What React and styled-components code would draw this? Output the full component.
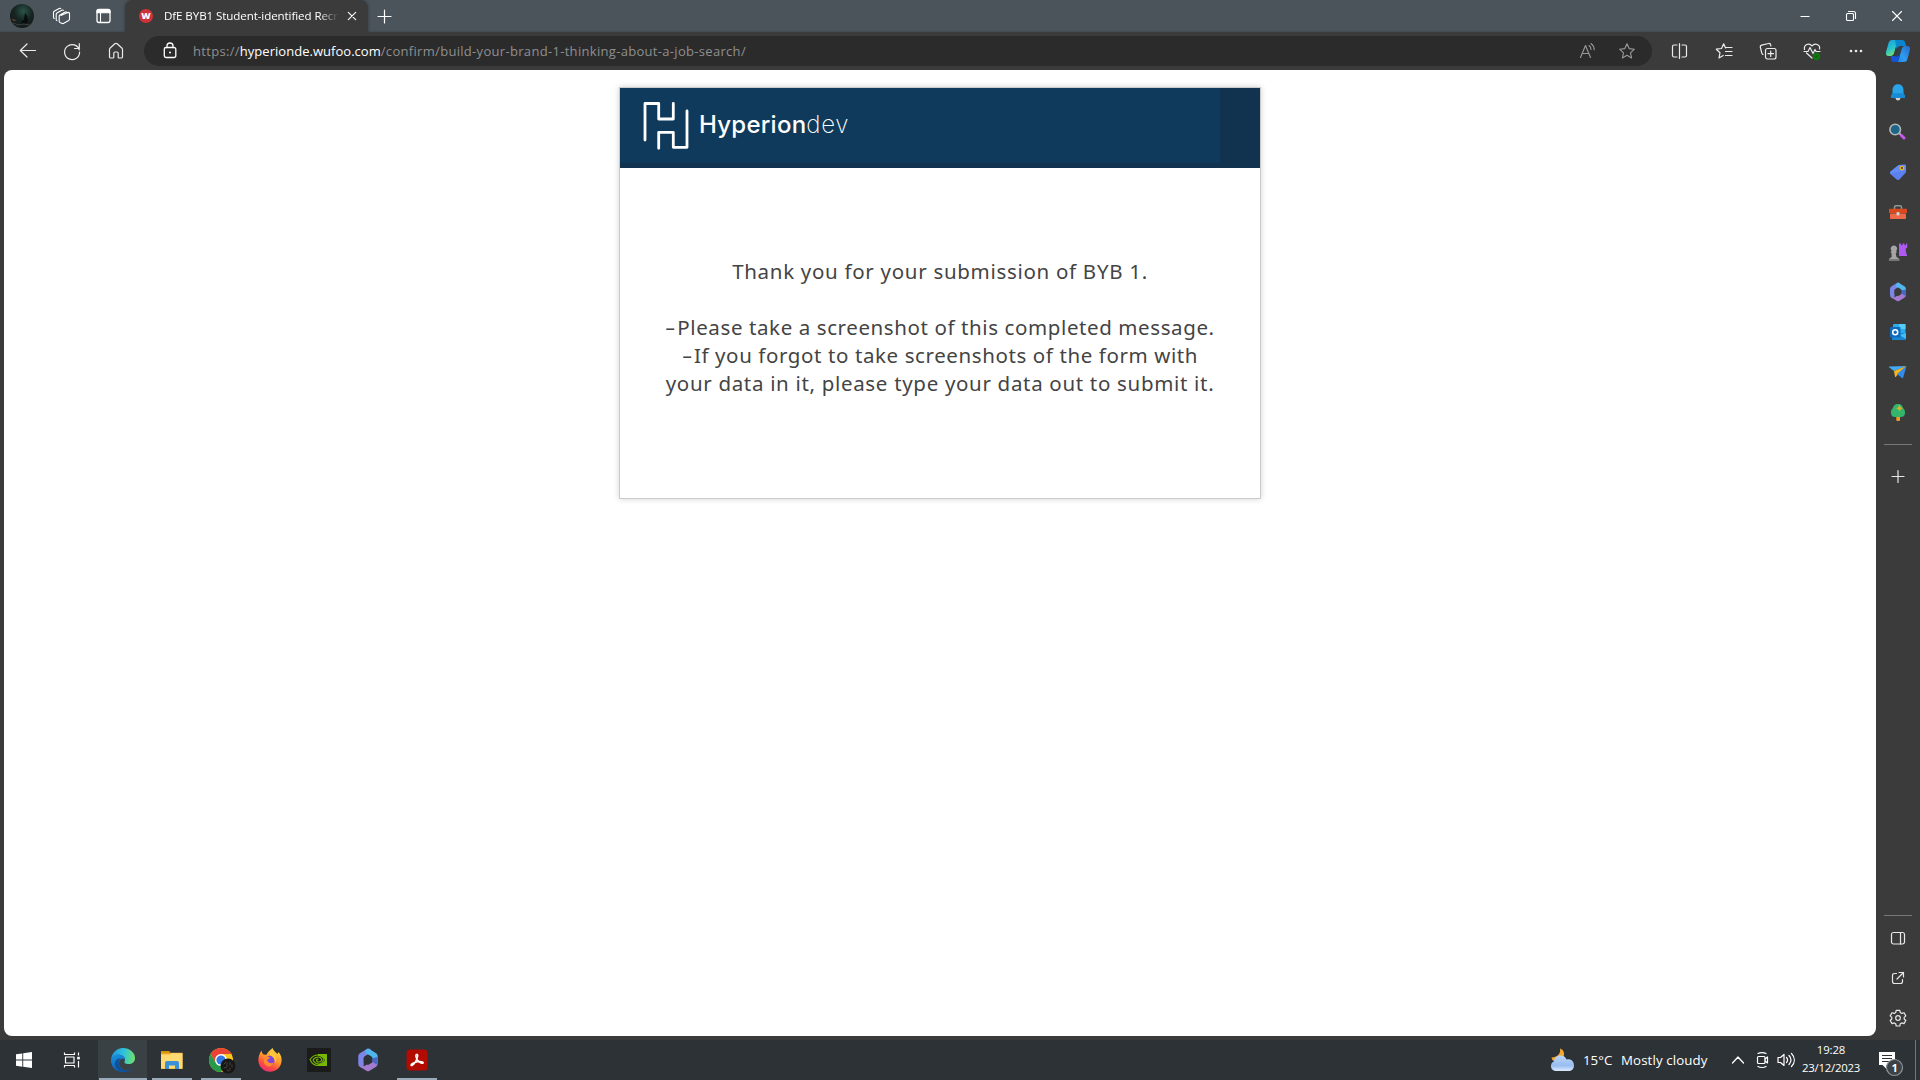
import React from "react";
import styled, { createGlobalStyle } from "styled-components";

const Global = createGlobalStyle`
  * { box-sizing: border-box; }
  html, body { margin: 0; padding: 0; height: 100%; overflow: hidden; }
  body { background: #3b3b3b; font-family: "Open Sans", "Noto Sans", sans-serif; }
`;

const Desktop = styled.div`
  width: 1920px;
  height: 1080px;
  display: flex;
  flex-direction: column;
  background: #3b3b3b;
  overflow: hidden;
`;

const TitleBar = styled.header`
  height: 32px;
  display: flex;
  align-items: center;
  background: linear-gradient(#4b545b 0 30px, #424b50 32px);
  color: #fff;
`;

const Cell = styled.div`
  flex: none;
  width: ${(p) => p.$w}px;
  height: ${(p) => (p.$h ? p.$h + "px" : "auto")};
  display: flex;
  align-items: center;
  justify-content: center;
  color: ${(p) => p.$color || "inherit"};
`;

const Spacer = styled.div`
  flex: ${(p) => (p.$w ? `0 0 ${p.$w}px` : "1 1 0")};
`;

const Tab = styled.div`
  width: 243px;
  height: 32px;
  display: flex;
  align-items: center;
  padding-left: 14px;
  background: #3b3b3b;
  border-radius: 8px 8px 0 0;
  box-shadow: 0 0 3px rgba(20, 25, 30, 0.5);
  clip-path: inset(0 -4px 0 -4px);
`;

const TabTitle = styled.div`
  width: 175px;
  margin-left: 11px;
  white-space: nowrap;
  font-size: 11.6px;
  line-height: 16px;
  letter-spacing: ${(p) => p.$spacing}px;
  mask-image: linear-gradient(90deg, #000 155px, transparent 175px);
`;

const Toolbar = styled.div`
  height: 38px;
  display: flex;
  align-items: center;
  color: #ececec;
`;

const AddressBar = styled.div`
  width: 1508px;
  height: 30px;
  display: flex;
  align-items: center;
  border-radius: 15px;
  background: #2b2b2b;
`;

const Url = styled.div`
  font-size: 13px;
  line-height: 18px;
  white-space: nowrap;
  color: #8f8f8f;
  letter-spacing: ${(p) => p.$spacing}px;
`;

const Host = styled.span`
  color: #fff;
  letter-spacing: ${(p) => p.$spacing}px;
`;

const Main = styled.div`
  height: 970px;
  display: flex;
  padding-left: 4px;
`;

const Page = styled.main`
  width: 1872px;
  height: 966px;
  display: flex;
  flex-direction: column;
  align-items: center;
  padding: 17px 0 0 0;
  border-radius: 8px;
  background: #fff;
`;

const Card = styled.section`
  width: 642px;
  height: 412px;
  border: 1px solid #ccc;
  box-shadow: 0 0 6px rgba(0, 0, 0, 0.18);
  background: #fff;
`;

const Banner = styled.div`
  height: 80px;
  display: flex;
  background: #123350;
`;

const BannerArt = styled.div`
  width: 600px;
  height: 75px;
  display: flex;
  align-items: flex-start;
  padding: 12px 0 0 20px;
  background: #0f3a5b;
`;

const Brand = styled.div`
  margin: 9px 0 0 8px;
  font-family: Inter, sans-serif;
  font-size: 24px;
  line-height: 32px;
  font-weight: 500;
  letter-spacing: 0.25px;
  color: #fff;
`;

const BrandLight = styled.span`
  font-weight: 200;
  letter-spacing: 0.7px;
`;

const Message = styled.div`
  padding-top: 89px;
  font-family: "Noto Sans", sans-serif;
  font-size: 20.5px;
  color: #444;
`;

const Line = styled.p`
  margin: 0 0 ${(p) => p.$gap || 0}px;
  height: 28px;
  line-height: 28px;
  text-align: center;
  white-space: nowrap;
  letter-spacing: ${(p) => p.$spacing}px;
`;

const Dash = styled.span`
  display: inline-block;
  width: 12px;
  transform: scaleX(1.6);
  transform-origin: 0 50%;
  text-align: left;
`;

const Sidebar = styled.aside`
  width: 44px;
  display: flex;
  flex-direction: column;
  align-items: center;
  padding: 2px 0;
  color: #e8e8e8;
`;

const Rule = styled.div`
  flex: none;
  width: 28px;
  height: 1px;
  margin: ${(p) => p.$margin};
  background: #777;
`;

const Taskbar = styled.footer`
  height: 40px;
  display: flex;
  align-items: stretch;
  background: #2d3236;
  color: #fff;
`;

const Task = styled.div`
  width: 49px;
  display: flex;
  align-items: center;
  justify-content: center;
  position: relative;
  background: ${(p) => (p.$active ? "#3a4145" : "transparent")};
  &::after {
    content: "";
    display: ${(p) => (p.$bar ? "block" : "none")};
    position: absolute;
    bottom: 0;
    width: ${(p) => p.$bar}px;
    height: 2px;
    background: #99abbb;
  }
`;

const Weather = styled.div`
  display: flex;
  align-items: center;
  font-size: 13.3px;
  white-space: nowrap;
  letter-spacing: ${(p) => p.$spacing}px;
  width: ${(p) => p.$w}px;
`;

const Clock = styled.div`
  width: 68px;
  display: flex;
  flex-direction: column;
  align-items: center;
  padding-top: 1px;
  font-size: 11.4px;
  line-height: 18px;
  white-space: nowrap;
`;

const ClockLine = styled.span`
  letter-spacing: ${(p) => p.$spacing}px;
`;

const DesktopEdge = styled.div`
  width: 1px;
  background: #70767a;
`;

const Glyph = styled.svg`
  display: block;
  overflow: visible;
  fill: none;
  stroke: currentColor;
  stroke-width: ${(p) => p.$stroke || 1.1};
  stroke-linecap: round;
  stroke-linejoin: round;
`;

const Badge = styled.text`
  font: 700 11px "Open Sans", sans-serif;
  fill: #fff;
  stroke: none;
`;

const Favicon = styled.div`
  width: 14px;
  height: 14px;
  border-radius: 7px;
  background: #cf3339;
  color: #fff;
  font: 800 9px/14px "Open Sans", sans-serif;
  text-align: center;
`;

/* 24px artboard whose origin is its centre */
const Icon = ({ children, stroke, x = 0, y = 0 }) => (
  <Glyph width="24" height="24" viewBox={`${-12 - x} ${-12 - y} 24 24`} $stroke={stroke}>
    {children}
  </Glyph>
);

const Avatar = () => (
  <Icon>
    <defs>
      <radialGradient id="av" cx=".55" cy=".3" r=".7">
        <stop offset="0" stopColor="#2c5448" />
        <stop offset=".55" stopColor="#152421" />
        <stop offset="1" stopColor="#181a1a" />
      </radialGradient>
    </defs>
    <circle r="12" fill="url(#av)" stroke="none" />
    <path d="M3-3l2 3 1 5-2 3-2-1-4 2 2-4 2-1z" fill="#070d0c" stroke="none" />
    <path d="M-11 3l6 1-3 1z" fill="#6f4a2a" stroke="none" />
    <path d="M-9 7l5 2 5-1 7 1" stroke="#35413d" strokeWidth="1" />
  </Icon>
);

const Workspaces = () => (
  <Icon x={-0.5}>
    <path d="M-.6-.600L6.200-3.600c1-.4 1.800 0 1.800 1V3c0 .7-.2 1.100-.8 1.500L2.300 7.300c-.8.500-1.500.300-2.200-.1L-1.500 6.500c-.6-.3-.8-.7-.8-1.300V.300c0-.6.2-1 .7-1.300l4.800-2.800c.6-.4 1-.4 1.600-.1l1.900.8" />
    <path d="M-4.600 4.600c-.5-.3-.7-.6-.7-1.200V-1.700c0-.6.200-1 .7-1.300L.3-5.800c.600-.3 1-.3 1.600 0" />
    <path d="M-7.300 2.500c-.5-.3-.700-.6-.7-1.200V-3.500c0-.6.200-1 .7-1.300l4.900-2.800c.6-.3 1-.3 1.600 0" />
  </Icon>
);

const TabActions = () => (
  <Icon x={0.5}>
    <rect x="-6.500" y="-6.500" width="13" height="13" rx="2" strokeWidth="1.300" />
    <path d="M-6.500-5c0-1 .7-1.500 1.500-1.500h10c1 0 1.500.5 1.500 1.500v1.700h-13z" fill="currentColor" />
    <path d="M-3-3.500V6.500" />
  </Icon>
);

const Cross = ({ r = 4 }) => (
  <Icon>
    <path d={`M${-r} ${-r}L${r} ${r}M${r} ${-r}L${-r} ${r}`} />
  </Icon>
);

const Plus = ({ r = 6.5, x }) => (
  <Icon stroke={1.2} x={x}>
    <path d={`M${-r} .5H${r}M0 ${-r + 0.5}V${r + 0.5}`} />
  </Icon>
);

const Back = () => (
  <Icon stroke={1.2}>
    <path d="M7.500 -.5H-7.500M-1-7L-7.700-.5L-1 6" />
  </Icon>
);
const Refresh = () => (
  <Icon stroke={1.2}>
    <path d="M7.300-1A7.500 7.500 0 1 0 7.600 1.200M7.300-7.500V-2.500H2.500" />
  </Icon>
);
const Home = () => (
  <Icon stroke={1.2}>
    <path d="M-6.500-1.500c0-.6.2-1 .7-1.500l4.600-4.200c.7-.6 1.700-.6 2.400 0L5.800-3c.5.5.7.9.7 1.500v7.300c0 .7-.5 1.200-1.200 1.200H3.200c-.7 0-1-.4-1-1V2.300c0-.8-.5-1.300-1.200-1.300h-2c-.7 0-1.200.5-1.200 1.300V6c0 .6-.3 1-1 1h-2.100c-.7 0-1.200-.5-1.200-1.200z" />
  </Icon>
);
const Lock = () => (
  <Icon stroke={1.3}>
    <rect x="-5.700" y="-3.500" width="11.500" height="10" rx="1.700" />
    <path d="M-3-3.500V-5c0-1.700 1.300-3 3-3s3 1.300 3 3v1.500" />
    <circle cx="0" cy="1.500" r="1" fill="currentColor" stroke="none" />
  </Icon>
);
const ReadAloud = () => (
  <Icon x={0.5}>
    <path d="M-7 6.500L-2-5.500L3 6.500M-5.300 2.500H1.300M1.500-5.500c1.300.9 2 2.200 2 4M3.500-7.500c2 1.500 3.200 3.500 3.200 6.300" />
  </Icon>
);
const starPath =
  "M0-7.200L2.200-2.400L7.400-1.800L3.500 1.800L4.600 7L0 4.300L-4.600 7L-3.500 1.800L-7.400-1.800L-2.200-2.400Z";
const Star = () => (
  <Icon>
    <path d={starPath} />
  </Icon>
);
const Split = () => (
  <Icon stroke={1.2} x={0.5}>
    <path d="M-2.500 6h-3c-1 0-1.500-.6-1.500-1.500v-9c0-.9.500-1.500 1.500-1.500h3M2.500 6h3c1 0 1.500-.6 1.500-1.500v-9c0-.9-.5-1.500-1.500-1.500h-3M0-7.500V7.500" />
  </Icon>
);
const Favorites = () => (
  <Icon stroke={1.2}>
    <path d="M1.500-3L-.3-7.200L-2.500-2.500L-7.700-1.800L-4 1.700L-5 7L-.8 4.500M2-3.500H8M1.500.5H8M1.500 4.500H8" />
  </Icon>
);
const Collections = () => (
  <Icon stroke={1.2}>
    <rect x="-2.500" y="-2.500" width="10.500" height="10.500" rx="2" />
    <path d="M2.700 0v5.500M0 2.700h5.500M-5 3.500c-.7-.2-1-.8-1.200-1.500L-7.600-3.500c-.3-1.200.2-2 1.300-2.300L.5-7.500c1-.3 1.800.200 2.100 1.300l.3 1.200" />
  </Icon>
);
const Health = () => (
  <Icon stroke={1.2}>
    <path d="M-7.500-1.500c-1-4.500 4.500-7.500 7.500-3.500c3-4 8.500-1 7.500 3M-5.500 2L0 7M-8 .500h4l2-4 3 6 2-4 1 2h4" />
    <circle cx="4.500" cy="5.500" r="3.700" fill="#117711" stroke="none" />
    <path d="M3 5.500l1 1 2-2" stroke="#0a4f0a" strokeWidth=".8" />
  </Icon>
);
const Dots = () => (
  <Icon>
    <g fill="currentColor" stroke="none">
      <circle cx="-5" r="1.300" />
      <circle cx="0" r="1.300" />
      <circle cx="5" r="1.300" />
    </g>
  </Icon>
);
const Copilot = () => (
  <Icon>
    <defs>
      <linearGradient id="cpA" x1="0" y1="0" x2=".4" y2="1">
        <stop offset="0" stopColor="#169fdc" />
        <stop offset=".55" stopColor="#26c0cf" />
        <stop offset="1" stopColor="#69df7c" />
      </linearGradient>
      <linearGradient id="cpB" x1="1" y1="0" x2="0" y2="1">
        <stop offset="0" stopColor="#2468c8" />
        <stop offset=".6" stopColor="#2f9df0" />
        <stop offset="1" stopColor="#1b8af0" />
      </linearGradient>
    </defs>
    <g stroke="none">
      <path d="M-6-11H1C0-10.500-.6-9.500-1-8L-3.600 1.500C-4.300 4-5.300 5-7 5h-2c-3 0-3.500-2-2.700-5l2-7c.8-3 1.700-4 3.700-4z" fill="url(#cpA)" />
      <path d="M-2-11H4c2 0 2.700 1 3.300 3l.9 3H5C2.500-5 1.500-3.500 1-2L-.5 3C-1 4.500-2 5-3.500 5h-3C-5 4.500-4.200 3.300-3.600 1.500L-1-8C-.7-9.500-1-10.500-2-11z" fill="#3b3b3b" />
      <path d="M-3-11H4c2 0 2.700 1 3.300 3l.9 3H3C.5-5-.5-4-1.300-2L-2-4z" fill="#0a86cf" />
      <path d="M6 11h-7C0 10.500.6 9.500 1 8L3.600-1.500C4.300-4 5.300-5 7-5h2c3 0 3.500 2 2.700 5l-2 7C8.900 10 8 11 6 11z" fill="url(#cpB)" />
      <path d="M-7.200 5h3c2 0 3.200-.5 4-2L2 0 .8 8C.3 10-.2 10.700-1 11h-3c-2 0-2.700-1-3-3z" fill="#1653d9" />
      <path d="M1-3.500h2.500L1.200 4C.8 5-.3 5.500-1.500 5.500h-1z" fill="#2c4350" />
    </g>
  </Icon>
);

const Minimize = () => (
  <Icon>
    <path d="M-4.500 .5H4.500" strokeLinecap="butt" strokeWidth="1" />
  </Icon>
);
const Restore = () => (
  <Icon>
    <rect x="-4.500" y="-2.500" width="7" height="7" rx="1" />
    <path d="M-2.500-4.500H2.500c1.300 0 2 .700 2 2V2.500" />
  </Icon>
);

const Bell = () => (
  <Icon>
    <g stroke="none">
      <path d="M-2.500 6h5c-.5 1.800-1.300 2.500-2.500 2.500S-2 7.800-2.500 6z" fill="#d6d6d6" />
      <path d="M0-7.800c3.700 0 5.500 2.700 5.500 6v3l1.500 3c.3 1-.2 1.600-1 1.600H-6c-.8 0-1.300-.6-1-1.600l1.500-3v-3c0-3.300 1.800-6 5.500-6z" fill="#2aa4e8" />
      <path d="M-5.500 1.200h11l1.500 3c.3 1-.2 1.600-1 1.600H-6c-.8 0-1.300-.6-1-1.600z" fill="#168bd6" />
    </g>
  </Icon>
);
const Search = () => (
  <Icon y={-1}>
    <path d="M1 2L4 5" stroke="#aaa" strokeWidth="2" />
    <path d="M3.500 4.500L6 7" stroke="#ca55ef" strokeWidth="3" />
    <circle cx="-2.800" cy="-1.500" r="5.300" fill="#1d6588" stroke="#b5b5b5" strokeWidth="1.600" />
  </Icon>
);
const Tag = () => (
  <Icon>
    <path d="M.5-7L6.500-7.500c1 0 1.500.5 1.500 1.500v5c0 1-.3 1.500-1 2.200L1.500 7.300c-1 1-2 1-3 0L-7.500 2c-.8-.8-.7-2 .1-2.700z" fill="#628cf6" stroke="none" />
    <path d="M8-2v2.500L1.500 7.300c-1 1-2 1-3 0L-7.500 2z" fill="#5574e8" stroke="none" opacity=".5" />
    <circle cx="4" cy="-4" r="1.700" fill="#3b3b3b" stroke="#f1b51c" strokeWidth="1.300" />
  </Icon>
);
const Toolbox = () => (
  <Icon>
    <path d="M-3.500-3v-1.700c0-1 .5-1.500 1.500-1.500h4c1 0 1.500.5 1.500 1.500V-3" stroke="#8e9999" strokeWidth="1.500" />
    <rect x="-9" y="-3.200" width="18" height="4.500" rx=".8" fill="#d9481f" stroke="none" />
    <rect x="-8" y="1.500" width="16" height="5.500" rx=".8" fill="#ee6846" stroke="none" />
    <rect x="-1.500" y="0" width="3" height="3.500" rx="1" fill="#d3d3d3" stroke="none" />
  </Icon>
);
const Chess = () => (
  <Icon>
    <g stroke="none">
      <path d="M1-8.500h2v1.700h1.500v-1.700h2v1.700H8v-1.700h1.200v4L7.500-3l1 5.500H9V4H1z" fill="#b05af4" />
      <path d="M-4-6.500a3.200 3.200 0 0 1 2 5.600l1 .9-1.300 1.300L-1.500 5l2.300 1.500c.8.500 1 2.500 0 2.500H-8.500c-1 0-.8-2 0-2.500L-6.300 5l-.2-3.700L-7.500 0l1.300-.9A3.200 3.200 0 0 1-4-6.500z" fill="#a5a5a5" />
      <path d="M-8.700 7h9.500c.6 1 .4 2-.3 2h-9c-.8 0-.8-1-.2-2z" fill="#777" />
    </g>
  </Icon>
);
const M365 = ({ scale = 1, ground = "#3b3b3b" }) => (
  <Icon>
    <g stroke="none" transform={`scale(${scale})`}>
      <path d="M-1-9L-6-6c-1.500.9-2 1.800-2 3.500v5c0 1.500.8 2.800 2 3.500 1.500.5 2.500-.2 2.500-2V-1c0-1 .5-2 1.500-2.500L2-6V-9C1-9.400-.3-9.400-1-9z" fill="#7d86e6" />
      <path d="M1-9l5 3c1.500.9 2 2 2 3.500v5L3.500.500V-1c0-1-.5-1.700-1.300-2.200L-2-5.500v-2L-1-9C-.3-9.400.3-9.400 1-9z" fill="#4fb6ee" />
      <path d="M8 1v1.500c0 1.700-.6 2.700-2 3.500L1 9c-.7.4-1.300.4-2 0l-5-3c-1-.6-1.700-1.500-2-2.500C-6 6-4 5.500-3 5l5-3L3.500 0z" fill="#a57bd2" />
      <path d="M8-2.500v5c0 .8-.5 1.400-1.500 1L3.500 1.500v-3z" fill="#4767c7" />
      <path d="M0-4.300L3.500-2v4L0 4.200-3.500 2v-4z" fill={ground} />
    </g>
  </Icon>
);
const Outlook = () => (
  <Icon>
    <g stroke="none">
      <rect x="-5" y="-8" width="12.500" height="12" rx="1" fill="#2daced" />
      <path d="M1-8h5.500c.6 0 1 .4 1 1v4H1z" fill="#54ccf5" />
      <path d="M-6 1h14v5.500c0 .8-.5 1.500-1.500 1.500H-6z" fill="#1686d2" />
      <path d="M8 1v6L1 3z" fill="#40bdf2" />
      <rect x="-8" y="-5" width="10.500" height="10.500" rx="1" fill="#0d6abd" />
    </g>
    <circle cx="-2.800" cy=".2" r="2.500" stroke="#fff" strokeWidth="1.500" fill="#0d6abd" />
  </Icon>
);
const Plane = () => (
  <Icon>
    <g stroke="none">
      <path d="M8.500-6L-8.500-5.500c-.6 0-.8.600-.2 1L-4-1z" fill="#42abf4" />
      <path d="M8.500-6L-4-1l1 5.500c.1.600.7.700 1 .2L0 2z" fill="#f6b51e" />
      <path d="M8.500-6L-1 2l5 4c.6.400 1 .2 1.200-.4z" fill="#328be9" />
    </g>
  </Icon>
);
const Tree = () => (
  <Icon y={0.5}>
    <g stroke="none">
      <rect x="-1.700" y="3" width="3.700" height="5.500" rx="1" fill="#ee9c22" />
      <path d="M0-8.500c3.300 0 4.500 2 5 4C6.800-3 7.500-.5 6.800 1.800 6.300 4 5 4.500 3 4.500h-6C-5 4.500-6.300 4-6.800 1.800-7.500-.5-6.800-3-5-4.500c.5-2 1.700-4 5-4z" fill="#35b46c" />
      <path d="M1.500-7l.8 2 2 .8-2 .8-.8 2-.8-2-2-.8 2-.8z" fill="#f5aa20" stroke="#f5aa20" strokeWidth=".6" />
    </g>
  </Icon>
);
const SidePanel = () => (
  <Icon stroke={1.2}>
    <rect x="-6.500" y="-5.500" width="13" height="11.500" rx="2" />
    <path d="M2.500-5.500V6" />
  </Icon>
);
const External = () => (
  <Icon stroke={1.2}>
    <path d="M-1.500-4.500h-2c-1.300 0-2 .7-2 2v6c0 1.300.7 2 2 2h6c1.300 0 2-.7 2-2v-2M1-5.500h4.500V-1M5.500-5.500L-1 1" />
  </Icon>
);
const Gear = () => (
  <Icon stroke={1.2}>
    <circle r="2.300" />
    <path d="M-1.800-7.700h3.600l.5 2.200 1.500.9 2.200-.7 1.800 3.200-1.600 1.500v1.600l1.600 1.500L6 5.600l-2.200-.7-1.500.9-.5 2.200h-3.600l-.5-2.200-1.500-.9L-6 5.600l-1.800-3.100L-6.200 1V-.6l-1.600-1.500L-6-5.300l2.200.7 1.500-.9z" />
  </Icon>
);

const Windows = () => (
  <Icon>
    <path d="M-8-5.700L-1.700-6.600V-.500H-8zM-.8-6.700L8-8V-.5H-.8zM-8 .5H-1.700V6.700L-8 5.700zM-.8.500H8V8L-.8 6.800z" fill="#fff" stroke="none" />
  </Icon>
);
const TaskView = () => (
  <Icon stroke={1.2}>
    <path d="M-7.500-7.500v2H2.500v-2M-7.500 7.500v-2H2.500v2M6.500-7.500v3M6.500 1v6.500" strokeLinecap="butt" />
    <rect x="-6.500" y="-3" width="8.500" height="6" />
    <rect x="5.200" y="-3.200" width="2.600" height="2.600" fill="#fff" stroke="none" />
  </Icon>
);
const Edge = () => (
  <Icon>
    <defs>
      <linearGradient id="edA" x1="0" y1=".4" x2="1" y2=".5">
        <stop offset="0" stopColor="#2294dd" />
        <stop offset=".5" stopColor="#2dc1dc" />
        <stop offset="1" stopColor="#6ce36c" />
      </linearGradient>
      <linearGradient id="edB" x1="0" y1="0" x2=".3" y2="1">
        <stop offset="0" stopColor="#1b94df" />
        <stop offset="1" stopColor="#0c60b8" />
      </linearGradient>
    </defs>
    <g stroke="none">
      <path d="M-12 0C-11.500-7-6.500-12 0-12S12-7.500 12-2c0 4-3 6-6.500 6C2 4 1 2.800 1.500 1.500 2.500.5 2.500-4-3-5-7.500-5.800-11-3-12 0z" fill="url(#edA)" />
      <path d="M-12 0c1-4 4.500-6.300 8.500-5.500C0-5 2.300-2.500 2-.5.500-2-4-1.500-4 3c0 5 5 8 9 7.500C3 11.500 1.500 12 0 12-7 12-12.300 6.500-12 0z" fill="url(#edB)" />
      <path d="M-1.500-1.500C-5 0-4.500 3-4 5c1.500 5.500 8 7.500 14 2.500C7.500 11 4 12.300 1 12c-6-.5-10-5-9-9.500.7-3 3.500-4.500 6.500-4z" fill="#134f98" />
    </g>
  </Icon>
);
const Explorer = () => (
  <Icon>
    <g stroke="none">
      <path d="M-11-8.800h8l1.500 1.500H10.500V9H-11z" fill="#eab12e" />
      <path d="M-11-8.800h8l1.500 2H-11z" fill="#d99400" />
      <path d="M-11-5.500h9l1.500-1.300H10.500V8.500H-11z" fill="#ffda72" />
      <path d="M-7 9V3.500C-7 2-6.500 1-5 1H5c1.500 0 2 1 2 2.500V9H3V5.500h-6V9z" fill="#3a91d7" />
    </g>
  </Icon>
);
const Chrome = () => (
  <Icon>
    <g stroke="none">
      <circle r="12" fill="#fac71d" />
      <path d="M0-6H10.400A12 12 0 0 0-10.400-6L-5.200 3z" fill="#ea4335" />
      <path d="M-10.400-6A12 12 0 0 0 0 12L5.200 3 0 6-5.200 3z" fill="#269a4b" />
      <circle r="6" fill="#fff" />
      <circle r="4.600" fill="#3478e5" />
      <circle cx="7" cy="6" r="7.500" fill="#171716" />
    </g>
    <path d="M3 4l2-2M6 3v3M9 2v3M3 8l3-1M9 8v2M11 5v2M6 10l2 1" stroke="#5d5249" strokeWidth=".8" />
  </Icon>
);
const Firefox = () => (
  <Icon>
    <defs>
      <linearGradient id="ff" x1=".8" y1="0" x2=".3" y2="1">
        <stop offset="0" stopColor="#ffe14a" />
        <stop offset=".45" stopColor="#ff9a2b" />
        <stop offset=".75" stopColor="#fb4a42" />
        <stop offset="1" stopColor="#e82d75" />
      </linearGradient>
    </defs>
    <g stroke="none">
      <path d="M-8.500-9.500c.3 2 1 3 2 4l3 .3C-2.500-8 .5-10 2.500-12c1 3 3.500 4 5 6l1-2c2.500 3 3.500 6 3 9.500C10.800 7.500 6 11.800 0 11.800S-11.500 7-11.700.5c0-4 1.200-7 3.200-10z" fill="url(#ff)" />
      <circle cx="-.3" cy=".7" r="5" fill="#8045d9" />
      <path d="M-5-2.500c2-1.500 4-1 5 .5l-3 2C-2 3 1 4 4 2.500 2.500 6-1 7.500-4 5.500-6.500 4-7 0-5-2.500z" fill="#ff8a2f" />
      <path d="M0-8C6-7 8-2 5 3 5 0 4-3 0-5z" fill="#ffcf3c" opacity=".8" />
    </g>
  </Icon>
);
const Nvidia = () => (
  <Icon>
    <rect x="-12" y="-12" width="24" height="24" fill="#1a1b1a" stroke="none" />
    <path d="M-1-6H8V6H-1z" fill="#78b900" stroke="none" />
    <path d="M-1-4c4 0 6 2.500 7 4-2 3-4 4-7 4z" fill="#1a1b1a" stroke="none" />
    <path d="M-9-.5c2-3 5-4.500 8-4.500 3.500 0 5 2.500 6 4.500C3.500 2.500 1.500 4 0 4-3 4-5 2-6 0c1.500-2.300 3.500-3 5.500-3C1.500-3 2.500-1.500 3 0 2 1.500 1 2 0 2-1.500 2-2.500 1-2.500 0S-1.500-1-1-.5M-9-.5C-7.500 3-5 5.500-1 5.500" stroke="#78b900" strokeWidth="1.100" />
  </Icon>
);
const Acrobat = () => (
  <Icon stroke={1.5}>
    <rect x="-10.500" y="-10.500" width="21" height="21" rx="3.500" fill="#b30b00" stroke="none" />
    <path d="M-.5-5.500c1.500-.7 1.500 1.500.500 4C-1 1-3 4.500-5 5.500c-1.300.5-1.300-1 .500-2C-2 2 3 1 5.500 2c1.300.7.500 1.500-.8 1.300C2.500 3-1-1-1.200-4c0-.8.200-1.300.7-1.500z" stroke="#fff" />
  </Icon>
);
const WeatherIcon = () => (
  <Icon>
    <defs>
      <linearGradient id="cl" x1="0" y1="0" x2="0" y2="1">
        <stop offset="0" stopColor="#b9d5fa" />
        <stop offset=".65" stopColor="#9abdf0" />
        <stop offset="1" stopColor="#dceafd" />
      </linearGradient>
    </defs>
    <g stroke="none">
      <path d="M-2-11.500c4.500 1.500 5 6 3 9L-6 2c-2-.5-4-1.500-4.500-4.500C-5-3-1-6-2-11.500z" fill="#f4a62d" />
      <path d="M-7 11a5 5 0 0 1-1-9.500A6.500 6.500 0 0 1 4.500-.5c4.500-1 7.500 2 7.500 6 0 3-2 5.500-5 5.500z" fill="url(#cl)" />
    </g>
  </Icon>
);
const ChevronUp = () => (
  <Icon stroke={1.3}>
    <path d="M-5.500 3L0-3L5.500 3" />
  </Icon>
);
const MeetNow = () => (
  <Icon stroke={1.2}>
    <rect x="-4.500" y="-3.500" width="7.500" height="7" rx="1" />
    <path d="M3-1l2.500-2V3L3 1M-4-6.500c2-1.300 6-1.300 8 0M-4 6.500c2 1.300 6 1.300 8 0" />
  </Icon>
);
const Speaker = () => (
  <Icon stroke={1.2}>
    <path d="M-8-2.500h2.500L-2-5.500v11L-5.500 2.500H-8zM.5-2.500c1.300 1.500 1.300 3.500 0 5M3-4.500c2.500 2.800 2.500 6.200 0 9M5.500-6.500c3.800 4 3.800 9 0 13" />
  </Icon>
);
const Notification = () => (
  <Icon>
    <path d="M-9-8H7V5H-1.500V9L-5.500 5H-9z" fill="#fff" stroke="none" />
    <path d="M-6-4.500H4M-6-1.500H4M-6 1.500H4" stroke="#2d3236" strokeWidth="1" strokeLinecap="butt" />
    <circle cx="6.500" cy="7.500" r="8" fill="#3c4245" stroke="#8e9598" strokeWidth="1.200" />
    <Badge x="3.500" y="11.500">1</Badge>
  </Icon>
);

const Logo = () => (
  <Glyph width="51" height="52" viewBox="0 0 51 52" $stroke={2.8}>
    <g stroke="#fff">
      <path d="M5 40V3.500H18.700V19H33.300V3.500" />
      <path d="M18.700 48.300V32.300H33.300V47.300H47V11" />
    </g>
  </Glyph>
);

const sideApps = [Bell, Search, Tag, Toolbox, Chess, M365, Outlook, Plane, Tree];

export default function App() {
  return (
    <Desktop>
      <Global />
      <TitleBar>
        <Spacer $w={1} />
        <Cell $w={42}><Avatar /></Cell>
        <Cell $w={38}><Workspaces /></Cell>
        <Cell $w={44}><TabActions /></Cell>
        <Tab>
          <Favicon>W</Favicon>
          <TabTitle $spacing={-0.1}>DfE BYB1 Student-identified Recr</TabTitle>
          <Cell $w={25}><Cross r={3.7} /></Cell>
        </Tab>
        <Cell $w={32}><Plus x={0.5} /></Cell>
        <Spacer />
        <Cell $w={46}><Minimize /></Cell>
        <Cell $w={46}><Restore /></Cell>
        <Cell $w={46}><Cross r={4.5} /></Cell>
      </TitleBar>
      <Toolbar>
        <Spacer $w={6} />
        <Cell $w={44}><Back /></Cell>
        <Cell $w={44}><Refresh /></Cell>
        <Cell $w={44}><Home /></Cell>
        <Spacer $w={6} />
        <AddressBar>
          <Spacer $w={4} />
          <Cell $w={44} $color="#fff"><Lock /></Cell>
          <Spacer $w={1} />
          <Url $spacing={0.31}>
            https://<Host $spacing={0.03}>hyperionde.wufoo.com</Host>/confirm/build-your-brand-1-thinking-about-a-job-search/
          </Url>
          <Spacer />
          <Cell $w={40} $color="#9a9a9a"><ReadAloud /></Cell>
          <Cell $w={40} $color="#9a9a9a"><Star /></Cell>
          <Spacer $w={5} />
        </AddressBar>
        <Spacer $w={5} />
        <Cell $w={44}><Split /></Cell>
        <Cell $w={45}><Favorites /></Cell>
        <Cell $w={44}><Collections /></Cell>
        <Cell $w={44}><Health /></Cell>
        <Cell $w={44}><Dots /></Cell>
        <Cell $w={40}><Copilot /></Cell>
      </Toolbar>
      <Main>
        <Page>
          <Card>
            <Banner>
              <BannerArt>
                <Logo />
                <Brand>Hyperion<BrandLight>dev</BrandLight></Brand>
              </BannerArt>
            </Banner>
            <Message>
              <Line $spacing={0.7} $gap={28}>Thank you for your submission of BYB 1.</Line>
              <Line $spacing={0.6}><Dash>-</Dash>Please take a screenshot of this completed message.</Line>
              <Line $spacing={0.6}><Dash>-</Dash>If you forgot to take screenshots of the form with</Line>
              <Line $spacing={0.68}>your data in it, please type your data out to submit it.</Line>
            </Message>
          </Card>
        </Page>
        <Sidebar>
          {sideApps.map((AppIcon, i) => (
            <Cell key={i} $w={40} $h={40}><AppIcon /></Cell>
          ))}
          <Rule $margin="12px 0 11px" />
          <Cell $w={40} $h={40}><Plus r={6} /></Cell>
          <Spacer />
          <Rule $margin="0 0 2px" />
          <Cell $w={40} $h={40}><SidePanel /></Cell>
          <Cell $w={40} $h={40}><External /></Cell>
          <Cell $w={40} $h={40}><Gear /></Cell>
        </Sidebar>
      </Main>
      <Taskbar>
        <Cell $w={48}><Windows /></Cell>
        <Cell $w={48}><TaskView /></Cell>
        <Spacer $w={2} />
        <Task $active $bar={48}><Edge /></Task>
        <Task $bar={40}><Explorer /></Task>
        <Task $bar={40}><Chrome /></Task>
        <Task><Firefox /></Task>
        <Task><Nvidia /></Task>
        <Task><M365 scale={1.22} ground="#2d3236" /></Task>
        <Task $bar={40}><Acrobat /></Task>
        <Spacer />
        <Cell $w={24}><WeatherIcon /></Cell>
        <Spacer $w={9} />
        <Weather $w={38} $spacing={0}>15°C</Weather>
        <Weather $w={104} $spacing={0.1}>Mostly cloudy</Weather>
        <Cell $w={25}><ChevronUp /></Cell>
        <Cell $w={24}><MeetNow /></Cell>
        <Cell $w={23}><Speaker /></Cell>
        <Clock>
          <ClockLine $spacing={-0.1}>19:28</ClockLine>
          <ClockLine $spacing={-0.25}>23/12/2023</ClockLine>
        </Clock>
        <Spacer $w={9} />
        <Cell $w={28}><Notification /></Cell>
        <Spacer $w={13} />
        <DesktopEdge />
        <Spacer $w={4} />
      </Taskbar>
    </Desktop>
  );
}
